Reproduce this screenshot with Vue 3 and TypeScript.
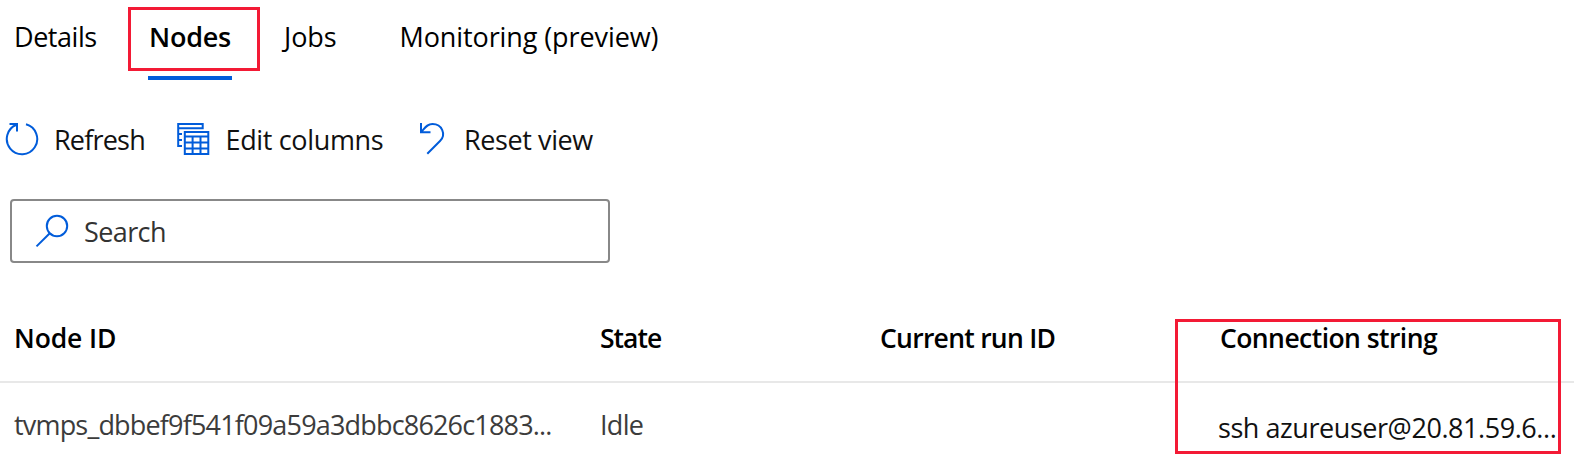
<script setup lang="ts">
interface Tab { label: string; key: string; active?: boolean }
interface Column { label: string; key: string; value: string }

const tabs: Tab[] = [
  { label: 'Details', key: 'details' },
  { label: 'Nodes', key: 'nodes', active: true },
  { label: 'Jobs', key: 'jobs' },
  { label: 'Monitoring (preview)', key: 'monitoring' },
]

const columns: Column[] = [
  { label: 'Node ID', key: 'node', value: 'tvmps_dbbef9f541f09a59a3dbbc8626c1883...' },
  { label: 'State', key: 'state', value: 'Idle' },
  { label: 'Current run ID', key: 'run', value: '' },
  { label: 'Connection string', key: 'connection', value: 'ssh azureuser@20.81.59.6...' },
]
</script>

<template>
  <main class="page">
    <nav class="tabs">
      <a v-for="tab in tabs" :key="tab.key" class="tab" :class="[tab.key, { active: tab.active }]">
        {{ tab.label }}
        <span v-if="tab.active" class="highlight"></span>
      </a>
    </nav>

    <div class="toolbar">
      <button class="command refresh">
        <svg width="34" height="34" viewBox="0 0 34 34">
          <path d="M21 2.3A15.2 15.2 0 1 1 11.5 2.8" />
          <path d="M4.5 2H12V9.5" />
        </svg>
        <span>Refresh</span>
      </button>
      <button class="command edit">
        <svg width="34" height="34" viewBox="0 0 34 34">
          <path d="M6 24H2.2V2H26.7V6.3H2.2M2.2 12H6M2.2 18H6" />
          <path d="M8.8 10H32.3V32H8.8ZM8.8 14.5H32.3M8.8 20.5H32.3M8.8 26.5H32.3M16.6 14.5V32M24.5 14.5V32" />
        </svg>
        <span>Edit columns</span>
      </button>
      <button class="command reset">
        <svg width="34" height="34" viewBox="0 0 34 34">
          <path d="M4 1V10.2H13.5M4 10.2C8 6 10 2 15.5 2C25 2 29.5 12.5 23 19L10.3 31.8" />
        </svg>
        <span>Reset view</span>
      </button>
    </div>

    <div class="search">
      <svg width="34" height="34" viewBox="0 0 34 34">
        <circle cx="22" cy="12" r="10.2" />
        <path d="M14.8 19.2L1.5 32.4" />
      </svg>
      <span>Search</span>
    </div>

    <section class="table">
      <div class="row head">
        <div v-for="col in columns" :key="col.key" class="cell" :class="col.key">{{ col.label }}</div>
      </div>
      <div class="row body">
        <div v-for="col in columns" :key="col.key" class="cell" :class="col.key">{{ col.value }}</div>
      </div>
      <span class="highlight"></span>
    </section>
  </main>
</template>

<style>
body { background: #fff; }
</style>

<style scoped>
.page {
  width: 1574px;
  height: 467px;
  overflow: hidden;
  background: #fff;
  color: #000;
  font: 27px/38px "Open Sans", "Noto Sans", sans-serif;
  white-space: nowrap;
}
svg {
  display: block;
  flex: none;
  fill: none;
  stroke: #015cda;
  stroke-width: 2;
}
.highlight {
  position: absolute;
  box-sizing: border-box;
  border: 3px solid #f31a35;
}
.tabs {
  display: grid;
  grid-template-columns: 134px 136px 115.5px auto;
  justify-content: start;
  height: 80px;
  padding-left: 14px;
}
.tab {
  position: relative;
  box-sizing: border-box;
  justify-self: start;
  height: 80px;
  padding-top: 18px;
}
.details { letter-spacing: -0.45px; }
.nodes { width: 84px; padding-left: 1px; font-weight: 600; letter-spacing: -0.25px; border-bottom: 4px solid #015cda; }
.nodes .highlight { left: -20px; top: 7px; width: 132px; height: 64px; }
.jobs { letter-spacing: -0.1px; }
.monitoring { letter-spacing: -0.1px; }
.toolbar {
  display: grid;
  grid-template-columns: 171px 241px auto;
  justify-content: start;
  margin-top: 40px;
  padding-left: 5px;
}
.command {
  display: flex;
  align-items: flex-start;
  height: 38px;
  margin: 0;
  padding: 0;
  border: 0;
  background: none;
  color: #111;
  font: inherit;
}
.command svg { margin-top: 2px; }
.command span { padding-top: 1px; }
.refresh span { margin-left: 15px; letter-spacing: -0.8px; }
.edit span { margin-left: 15.5px; letter-spacing: -0.34px; }
.reset span { margin-left: 13px; letter-spacing: -0.4px; }
.search {
  display: flex;
  align-items: center;
  box-sizing: border-box;
  width: 600px;
  height: 64px;
  margin: 41px 0 0 10px;
  padding-left: 23px;
  border: 2px solid #888;
  border-radius: 4px;
}
.search span { margin: 1px 0 0 15px; color: #333; letter-spacing: -0.6px; }
.table { position: relative; margin-top: 50px; }
.row {
  display: grid;
  grid-template-columns: 586px 280px 340px 1fr;
  padding-left: 14px;
}
.head {
  height: 68px;
  border-bottom: 2px solid #e8e8e8;
  font-size: 26.5px;
  font-weight: 600;
}
.head .cell { padding-top: 6px; }
.head .node { letter-spacing: -0.12px; }
.head .state { letter-spacing: -1px; }
.head .run { letter-spacing: -0.73px; }
.head .connection { letter-spacing: -0.56px; }
.body .cell { padding-top: 23px; color: #3c3c3c; }
.body .node { letter-spacing: -0.82px; }
.body .state { letter-spacing: -0.7px; }
.body .connection { margin-left: -2px; padding-top: 26px; color: #111; letter-spacing: -0.44px; }
.table > .highlight { left: 1175px; top: 6px; width: 386px; height: 135px; }
</style>
